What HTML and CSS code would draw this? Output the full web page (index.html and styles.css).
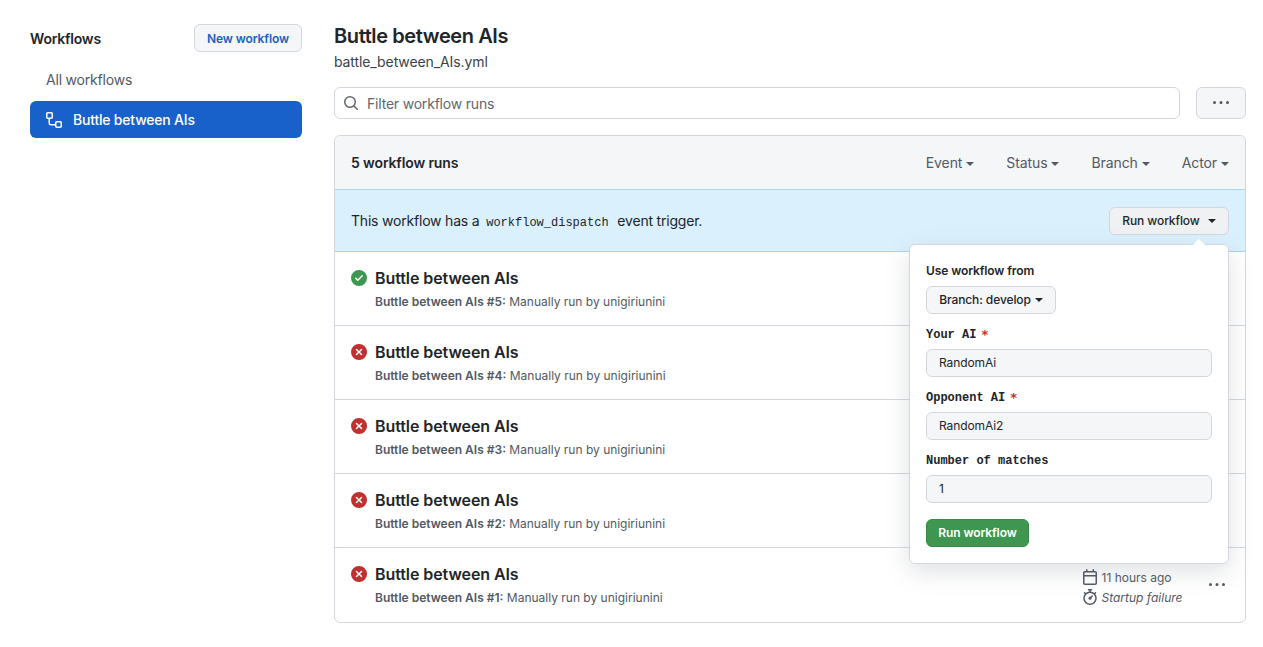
FILE: index.html
```html
<!DOCTYPE html>
<html lang="en">
<head>
    <meta charset="UTF-8">
    <meta name="viewport" content="width=device-width, initial-scale=1.0">
    <title>Buttle between AIs</title>
    <link rel="stylesheet" href="styles.css">
</head>
<body>
    <svg class="icon-defs" aria-hidden="true">
        <symbol id="i-workflow" viewBox="0 0 16 16"><path d="M0 1.75C0 .784.784 0 1.75 0h3.5C6.216 0 7 .784 7 1.75v3.5A1.75 1.75 0 0 1 5.25 7H4v4a1 1 0 0 0 1 1h4v-1.25C9 9.784 9.784 9 10.75 9h3.5c.966 0 1.75.784 1.75 1.75v3.5A1.75 1.75 0 0 1 14.25 16h-3.5A1.75 1.75 0 0 1 9 14.25v-.75H5A2.5 2.5 0 0 1 2.5 11V7h-.75A1.75 1.75 0 0 1 0 5.25Zm1.75-.25a.25.25 0 0 0-.25.25v3.5c0 .138.112.25.25.25h3.5a.25.25 0 0 0 .25-.25v-3.5a.25.25 0 0 0-.25-.25Zm9 9a.25.25 0 0 0-.25.25v3.5c0 .138.112.25.25.25h3.5a.25.25 0 0 0 .25-.25v-3.5a.25.25 0 0 0-.25-.25Z"/></symbol>
        <symbol id="i-search" viewBox="0 0 16 16"><path d="M10.68 11.74a6 6 0 0 1-7.922-8.982 6 6 0 0 1 8.982 7.922l3.04 3.04a.749.749 0 0 1-.326 1.275.749.749 0 0 1-.734-.215ZM11.5 7a4.499 4.499 0 1 0-8.997 0A4.499 4.499 0 0 0 11.5 7Z"/></symbol>
        <symbol id="i-kebab" viewBox="0 0 16 16"><path d="M8 9a1.5 1.5 0 1 0 0-3 1.5 1.5 0 0 0 0 3ZM1.5 9a1.5 1.5 0 1 0 0-3 1.5 1.5 0 0 0 0 3Zm13 0a1.5 1.5 0 1 0 0-3 1.5 1.5 0 0 0 0 3Z"/></symbol>
        <symbol id="i-check" viewBox="0 0 16 16"><path d="M8 16A8 8 0 1 1 8 0a8 8 0 0 1 0 16Zm3.78-9.72a.751.751 0 0 0-.018-1.042.751.751 0 0 0-1.042-.018L6.75 9.19 5.28 7.72a.751.751 0 0 0-1.042.018.751.751 0 0 0-.018 1.042l2 2a.75.75 0 0 0 1.06 0Z"/></symbol>
        <symbol id="i-x" viewBox="0 0 16 16"><path d="M2.343 13.657A8 8 0 1 1 13.658 2.343 8 8 0 0 1 2.343 13.657ZM6.03 4.97a.751.751 0 0 0-1.042.018.751.751 0 0 0-.018 1.042L6.94 8 4.97 9.97a.749.749 0 0 0 .326 1.275.749.749 0 0 0 .734-.215L8 9.06l1.97 1.97a.749.749 0 0 0 1.275-.326.749.749 0 0 0-.215-.734L9.06 8l1.97-1.97a.749.749 0 0 0-.326-1.275.749.749 0 0 0-.734.215L8 6.94Z"/></symbol>
        <symbol id="i-calendar" viewBox="0 0 16 16"><path d="M4.75 0a.75.75 0 0 1 .75.75V2h5V.75a.75.75 0 0 1 1.5 0V2h1.25c.966 0 1.75.784 1.75 1.75v10.5A1.75 1.75 0 0 1 13.25 16H2.75A1.75 1.75 0 0 1 1 14.25V3.75C1 2.784 1.784 2 2.75 2H4V.75A.75.75 0 0 1 4.75 0ZM2.5 7.5v6.75c0 .138.112.25.25.25h10.5a.25.25 0 0 0 .25-.25V7.5Zm10.75-4H2.75a.25.25 0 0 0-.25.25V6h11V3.75a.25.25 0 0 0-.25-.25Z"/></symbol>
        <symbol id="i-stopwatch" viewBox="0 0 16 16"><path d="M5.75.75A.75.75 0 0 1 6.5 0h3a.75.75 0 0 1 0 1.5h-.75v1l-.001.041a6.724 6.724 0 0 1 3.464 1.435l.007-.006.75-.75a.751.751 0 0 1 1.06 1.06l-.75.75-.006.007a6.75 6.75 0 1 1-10.548 0L2.72 5.03l-.75-.75a.751.751 0 0 1 1.06-1.06l.75.75.007.006A6.72 6.72 0 0 1 7.25 2.541V1.5H6.5a.75.75 0 0 1-.75-.75ZM8 14.5a5.25 5.25 0 1 0-.001-10.501A5.25 5.25 0 0 0 8 14.5Zm.389-6.7 1.33-1.33a.75.75 0 1 1 1.061 1.06L9.45 8.861A1.503 1.503 0 0 1 8 10.75a1.499 1.499 0 1 1 .389-2.95Z"/></symbol>
    </svg>

    <div class="layout">
        <aside class="sidebar">
            <div class="sidebar-head">
                <h2>Workflows</h2>
                <button class="btn btn-new" type="button">New workflow</button>
            </div>
            <a class="side-link side-all" href="#">All workflows</a>
            <a class="side-link active" href="#"><svg class="icon"><use href="#i-workflow"/></svg>Buttle between AIs</a>
        </aside>

        <main class="main">
            <h1>Buttle between AIs</h1>
            <p class="file-name">battle_between_AIs.yml</p>

            <div class="filter-row">
                <div class="filter-box">
                    <svg class="icon"><use href="#i-search"/></svg>
                    <span>Filter workflow runs</span>
                </div>
                <button class="btn btn-more" type="button" aria-label="More"><svg class="icon"><use href="#i-kebab"/></svg></button>
            </div>

            <section class="panel">
                <header class="panel-head">
                    <strong>5 workflow runs</strong>
                    <nav class="filters">
                        <span>Event<i class="caret"></i></span>
                        <span>Status<i class="caret"></i></span>
                        <span>Branch<i class="caret"></i></span>
                        <span>Actor<i class="caret"></i></span>
                    </nav>
                </header>

                <div class="banner">
                    <p>This workflow has a <code>workflow_dispatch</code> event trigger.</p>
                    <div class="run-wrap">
                        <button class="btn btn-run" type="button">Run workflow<i class="caret"></i></button>
                        <form class="popover">
                            <div class="pop-label">Use workflow from</div>
                            <button class="btn btn-branch" type="button">Branch: develop<i class="caret"></i></button>
                            <label class="mono-label">Your AI<b>*</b></label>
                            <div class="field">RandomAi</div>
                            <label class="mono-label">Opponent AI<b>*</b></label>
                            <div class="field">RandomAi2</div>
                            <label class="mono-label">Number of matches</label>
                            <div class="field">1</div>
                            <button class="btn btn-green" type="button">Run workflow</button>
                        </form>
                    </div>
                </div>

                <div class="run">
                    <svg class="status ok"><use href="#i-check"/></svg>
                    <div class="run-text">
                        <div class="run-title">Buttle between AIs</div>
                        <div class="run-sub"><b>Buttle between AIs #5:</b> Manually run by unigiriunini</div>
                    </div>
                </div>
                <div class="run">
                    <svg class="status fail"><use href="#i-x"/></svg>
                    <div class="run-text">
                        <div class="run-title">Buttle between AIs</div>
                        <div class="run-sub"><b>Buttle between AIs #4:</b> Manually run by unigiriunini</div>
                    </div>
                </div>
                <div class="run">
                    <svg class="status fail"><use href="#i-x"/></svg>
                    <div class="run-text">
                        <div class="run-title">Buttle between AIs</div>
                        <div class="run-sub"><b>Buttle between AIs #3:</b> Manually run by unigiriunini</div>
                    </div>
                </div>
                <div class="run">
                    <svg class="status fail"><use href="#i-x"/></svg>
                    <div class="run-text">
                        <div class="run-title">Buttle between AIs</div>
                        <div class="run-sub"><b>Buttle between AIs #2:</b> Manually run by unigiriunini</div>
                    </div>
                </div>
                <div class="run">
                    <svg class="status fail"><use href="#i-x"/></svg>
                    <div class="run-text">
                        <div class="run-title">Buttle between AIs</div>
                        <div class="run-sub"><b>Buttle between AIs #1:</b> Manually run by unigiriunini</div>
                    </div>
                    <div class="run-meta">
                        <div><svg class="icon"><use href="#i-calendar"/></svg>11 hours ago</div>
                        <div><svg class="icon"><use href="#i-stopwatch"/></svg><em>Startup failure</em></div>
                    </div>
                    <svg class="icon run-kebab"><use href="#i-kebab"/></svg>
                </div>
            </section>
        </main>
    </div>
</body>
</html>
```

FILE: styles.css
```css
* {
    box-sizing: border-box;
    margin: 0;
    padding: 0;
}

body {
    font-family: Inter, 'Liberation Sans', sans-serif;
    font-size: 14px;
    letter-spacing: -0.2px;
    color: #212529;
    background: #fff;
}

.icon-defs {
    display: none;
}

.icon {
    width: 16px;
    height: 16px;
    fill: currentColor;
    flex-shrink: 0;
}

.layout {
    display: flex;
    gap: 32px;
    padding: 24px 17px 24px 30px;
}

/* sidebar */
.sidebar {
    width: 272px;
    flex-shrink: 0;
}

.sidebar-head {
    display: flex;
    justify-content: space-between;
    align-items: center;
    height: 28px;
    margin-bottom: 9px;
}

.sidebar-head h2 {
    padding-top: 1px;
    font-size: 14px;
    font-weight: 600;
}

.side-link {
    display: flex;
    align-items: center;
    gap: 11px;
    height: 37px;
    padding: 0 16px;
    border-radius: 6px;
    color: #525963;
    text-decoration: none;
    font-size: 14px;
}

.side-all {
    padding-bottom: 1px;
}

.side-link.active {
    margin-top: 3px;
    background: #1861cb;
    color: #fff;
    font-weight: 500;
}

/* buttons */
.btn {
    display: inline-flex;
    align-items: center;
    justify-content: center;
    height: 28px;
    padding: 0 12px;
    border: 1px solid #d3d7dd;
    border-radius: 6px;
    background: #f5f6f8;
    color: #212529;
    font-family: inherit;
    font-size: 12px;
    font-weight: 500;
    letter-spacing: -0.1px;
    white-space: nowrap;
}

.btn-new {
    width: 108px;
    padding: 0;
    color: #1861cb;
    font-weight: 600;
}

.caret {
    display: inline-block;
    width: 0;
    height: 0;
    margin-left: 4px;
    vertical-align: middle;
    border-style: solid;
    border-width: 4px 4px 0;
    border-color: currentColor transparent transparent;
}

/* main column */
.main {
    flex: 1;
    min-width: 0;
}

h1 {
    font-size: 20px;
    font-weight: 600;
    line-height: 24px;
    letter-spacing: -0.4px;
}

.file-name {
    margin-top: 3px;
    line-height: 21px;
    color: #3c4148;
    font-size: 14px;
    letter-spacing: -0.1px;
}

.filter-row {
    display: flex;
    gap: 16px;
    margin-top: 15px;
}

.filter-box {
    flex: 1;
    display: flex;
    align-items: center;
    gap: 8px;
    height: 32px;
    padding: 0 8px;
    border: 1px solid #d3d7dd;
    border-radius: 6px;
    color: #606770;
}

.btn-more {
    width: 50px;
    height: 32px;
    color: #525963;
}

/* runs panel */
.panel {
    margin-top: 16px;
    border: 1px solid #d3d7dd;
    border-radius: 6px;
}

.panel-head {
    display: flex;
    justify-content: space-between;
    align-items: center;
    height: 54px;
    padding: 0 16px;
    background: #f5f6f8;
    border-bottom: 1px solid #a9d4f5;
    border-radius: 6px 6px 0 0;
}

.panel-head strong {
    font-weight: 600;
    letter-spacing: -0.13px;
}

.filters {
    display: flex;
    gap: 32px;
    color: #525963;
    letter-spacing: -0.1px;
}

.banner {
    display: flex;
    justify-content: space-between;
    align-items: center;
    height: 62px;
    padding: 0 16px;
    background: #dbf0fd;
    border-bottom: 1px solid #a9d4f5;
}

code {
    font-family: 'Liberation Mono', monospace;
    font-size: 12px;
    letter-spacing: 0;
    margin: 0 5px 0 3px;
}

.run-wrap {
    position: relative;
}

.btn-run {
    width: 120px;
    padding: 0;
    background: #eff1f3;
}

.btn-run .caret {
    margin-left: 8px;
}

.popover {
    position: absolute;
    top: 37px;
    right: 0;
    z-index: 5;
    width: 320px;
    padding: 17px 16px 16px;
    background: #fff;
    border: 1px solid #d3d7dd;
    border-radius: 6px;
    box-shadow: 0 8px 24px rgba(100, 110, 120, 0.2);
}

.popover::before {
    content: "";
    position: absolute;
    top: -6px;
    right: 22px;
    border-style: solid;
    border-width: 0 7px 7px;
    border-color: transparent transparent #fff;
}

.pop-label {
    font-size: 12px;
    font-weight: 600;
    line-height: 18px;
    letter-spacing: -0.1px;
    margin-bottom: 6px;
}

.btn-branch {
    width: 130px;
    padding: 0;
}

.mono-label {
    display: block;
    margin: 12px 0 5px;
    font-family: 'Liberation Mono', monospace;
    font-size: 12px;
    font-weight: 700;
    line-height: 18px;
    letter-spacing: 0;
}

.mono-label b {
    margin-left: 5px;
    font-family: 'DejaVu Sans', sans-serif;
    font-size: 13px;
    line-height: 0;
    vertical-align: -1px;
    color: #c5302e;
}

.field {
    display: flex;
    align-items: center;
    height: 28px;
    padding: 0 12px;
    background: #f5f6f8;
    border: 1px solid #d3d7dd;
    border-radius: 6px;
    font-size: 12px;
    letter-spacing: -0.1px;
}

.btn-green {
    margin-top: 16px;
    width: 103px;
    padding: 0;
    background: #3f9650;
    border-color: #388a48;
    color: #fff;
    font-weight: 600;
}

/* run rows */
.run {
    position: relative;
    display: flex;
    height: 74px;
    padding: 16px 16px 0;
    border-bottom: 1px solid #d3d7dd;
}

.run:last-child {
    border-bottom: 0;
}

.status {
    width: 16px;
    height: 16px;
    margin-top: 2px;
    margin-right: 8px;
    flex-shrink: 0;
}

.status.ok {
    fill: #3f9650;
}

.status.fail {
    fill: #c0302e;
}

.run-text {
    flex: 1;
}

.run-title {
    font-size: 16px;
    font-weight: 600;
    line-height: 20px;
    letter-spacing: -0.08px;
}

.run-sub {
    margin-top: 5px;
    font-size: 12px;
    line-height: 18px;
    letter-spacing: 0;
    color: #525963;
}

.run-sub b {
    font-weight: 600;
}

.run-meta {
    position: absolute;
    top: 19px;
    left: 747px;
    font-size: 12px;
    letter-spacing: 0;
    color: #525963;
}

.run-meta div {
    display: flex;
    align-items: center;
    gap: 3.5px;
    height: 20px;
}

.run-kebab {
    position: absolute;
    top: 29px;
    right: 20px;
    color: #525963;
}
```
